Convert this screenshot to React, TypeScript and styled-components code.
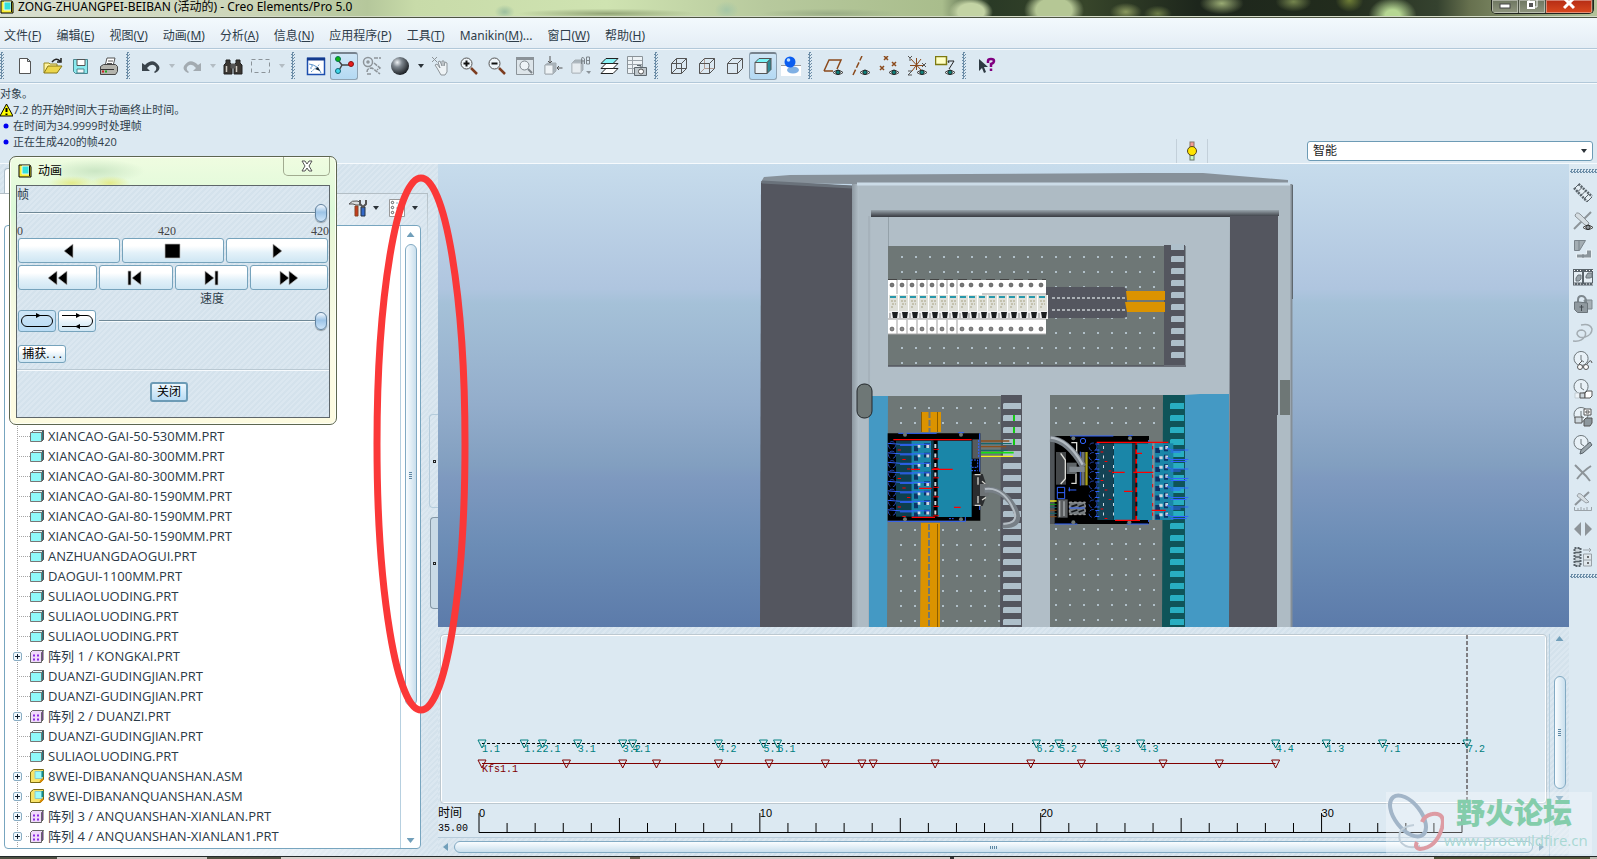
import React, { ReactNode } from "react";
import styled, { createGlobalStyle, css } from "styled-components";

const UI = `"Open Sans", "Noto Sans CJK SC", sans-serif`;
const WIDE = `"Noto Sans", "Noto Sans CJK SC", sans-serif`;
const SONG = `"Liberation Serif", "Noto Sans CJK SC", serif`;
const MONO = `"Liberation Mono", "Noto Sans CJK SC", monospace`;
const STRIPES = "repeating-linear-gradient(135deg, #dbe7f0 0 2px, #d4e2ec 2px 4px)";

const Global = createGlobalStyle`
  *, *::before, *::after { box-sizing: border-box; }
  body { margin: 0; background: #dce9f2; color: #2e3d4a; font: 12px/16px ${UI}; }
  button { font: inherit; color: inherit; padding: 0; border: 0; background: none; }
`;

const Window = styled.div`
  position: relative;
  min-height: 100vh;
  display: flex;
  flex-direction: column;
  overflow: hidden;
`;

/* ---------- title bar ---------- */

const TitleBar = styled.header`
  height: 18px;
  display: flex;
  align-items: flex-start;
  border-bottom: 1px solid #4c5442;
  box-shadow: inset 0 -1px #d5dcc8;
  background:
    radial-gradient(ellipse 22px 14px at 60.8% 70%, #c3d3a4 60%, transparent),
    radial-gradient(ellipse 30px 20px at 66% 60%, #b5c795 60%, transparent),
    radial-gradient(ellipse 16px 9px at 70.5% 70%, #8c9a60, transparent),
    radial-gradient(ellipse 22px 11px at 76.5% 20%, #9aab74, transparent),
    radial-gradient(ellipse 14px 8px at 72.5% 80%, #6d7d48, transparent),
    radial-gradient(ellipse 18px 10px at 81% 10%, #75854e, transparent),
    radial-gradient(ellipse 14px 12px at 84.5% 0%, #6f7e37, transparent),
    radial-gradient(ellipse 24px 18px at 87.2% 90%, #b6d793 30%, transparent),
    radial-gradient(ellipse 10px 7px at 31.6% 70%, #9cbf9f, transparent),
    radial-gradient(ellipse 90px 5px at 38% 80%, #93a577, transparent),
    radial-gradient(ellipse 12px 9px at 45.5% 60%, #a5c6a6, transparent),
    radial-gradient(ellipse 70px 5px at 52% 80%, #9aad86, transparent),
    linear-gradient(90deg, #d9dfd0 0, #cdd6b9 15%, #b5c79b 23%, #c8dba9 26%, #cfe3b1 38%, #b7c99d 48%, #a9bd8c 59%, #2a3a26 62%, #37452a 68%, #1d261c 75%, #222c1d 84%, #35422f 90%, #66704e 92%, #b4c49a 100%);
`;

const TitleText = styled.h1`
  margin: 0;
  flex: 1;
  padding-left: 4px;
  font: 12px/14px ${WIDE};
  color: #000;
  white-space: nowrap;
`;

const WindowButtons = styled.div`
  display: flex;
  margin-right: 3px;
  border: 1px solid #20241e;
  border-top: 0;
  border-radius: 0 0 5px 5px;
  overflow: hidden;
`;

const WindowButton = styled.button<{ $wide?: boolean }>`
  width: ${(p) => (p.$wide ? 47 : 27)}px;
  height: 13px;
  display: flex;
  justify-content: center;
  border-right: 1px solid #4a5042;
  box-shadow: inset 0 0 0 1px rgba(255, 255, 255, 0.4);
  background: ${(p) =>
    p.$wide ? "linear-gradient(#b52c14, #d9481e)" : "linear-gradient(#6d755f, #8f967f)"};
`;

/* ---------- menu and toolbar ---------- */

const MenuBar = styled.nav`
  height: 30px;
  display: flex;
  align-items: center;
  gap: 15px;
  padding: 5px 0 0 4px;
  font-family: ${WIDE};
  background: linear-gradient(#f3f9fd, #e4edf5);
`;

const MenuButton = styled.button`
  white-space: nowrap;
`;

const ToolBar = styled.div`
  height: 35px;
  display: flex;
  align-items: center;
  border-top: 1px solid #b2c8d9;
  border-bottom: 1px solid #b2c8d9;
  box-shadow: inset 0 1px #f6fafd, 0 1px #f6fafd;
`;

const Grip = styled.span<{ $first?: boolean }>`
  width: 4px;
  height: 27px;
  margin: 0 7px 0 ${(p) => (p.$first ? 0 : 3)}px;
  background: repeating-conic-gradient(#6d8ea8 0 25%, transparent 0 50%) 0 0 / 3px 3px;
`;

const ToolButton = styled.button<{ $on?: boolean; $w?: number }>`
  width: ${(p) => p.$w ?? 28}px;
  height: 28px;
  display: flex;
  align-items: center;
  justify-content: center;
  ${(p) =>
    p.$on &&
    css`
      border: 1px solid #8fa3b3;
      border-top: 2px solid #77838e;
      border-radius: 3px;
      background: linear-gradient(#cfe6f6, #b4d9f3);
    `}
`;

const DropArrow = styled.button<{ $dim?: boolean }>`
  width: 13px;
  height: 28px;
  display: flex;
  align-items: center;
  justify-content: center;
  &::after {
    content: "";
    border: 3px solid transparent;
    border-top: 4px solid ${(p) => (p.$dim ? "#b3bcc3" : "#2b3238")};
    border-bottom: 0;
  }
`;

/* ---------- messages ---------- */

const MessageArea = styled.section`
  min-height: 81px;
  display: flex;
  justify-content: space-between;
  align-items: flex-end;
  border-bottom: 1px solid #f6fafd;
`;

const MessageList = styled.ul`
  align-self: flex-start;
  list-style: none;
  margin: 0;
  padding: 3px 0 0;
`;

const Message = styled.li`
  display: flex;
  align-items: center;
  height: 16px;
  font-size: 11px;
  white-space: nowrap;
`;

const MessageMark = styled.span`
  width: 13px;
  height: 16px;
  display: flex;
  align-items: center;
  justify-content: center;
  flex: none;
`;

const StatusTools = styled.div`
  display: flex;
  align-items: center;
  padding: 0 4px 0 0;
`;

const StatusLight = styled.div`
  width: 32px;
  height: 24px;
  margin-right: 99px;
  display: flex;
  align-items: center;
  justify-content: center;
  border: 1px solid #c3d0da;
  border-width: 0 1px;
`;

const FilterSelect = styled.select`
  appearance: none;
  width: 286px;
  height: 20px;
  padding: 0 5px;
  border: 1px solid #6d9bb5;
  border-radius: 3px;
  color: #222;
  font: 12px/16px ${UI};
  background: #fff;
`;

const SelectWrap = styled.label`
  display: flex;
  align-items: center;
  &::after {
    content: "";
    width: 6px;
    margin-left: -12px;
    margin-right: 6px;
    border: 3px solid transparent;
    border-top: 4px solid #2b3238;
    border-bottom: 0;
    pointer-events: none;
  }
`;

/* ---------- workspace ---------- */

const Workspace = styled.main`
  flex: 1;
  display: flex;
`;

const SidePanel = styled.aside`
  flex: 0 0 438px;
  display: flex;
  flex-direction: column;
  background: ${STRIPES};
`;

const TabRow = styled.div`
  height: 29px;
  padding: 4px 0 0 4px;
`;

const Tab = styled.div`
  width: 150px;
  height: 25px;
  border: 1px solid #a9bac6;
  border-bottom: 0;
  border-radius: 4px 4px 0 0;
  background: linear-gradient(90deg, #fff, #dfe9f1);
`;

const PanelBody = styled.div`
  flex: 1;
  display: flex;
  background: linear-gradient(90deg, #fff 0, #fff 20%, rgba(255, 255, 255, 0) 100%);
`;

const PanelMain = styled.div`
  flex: 1;
  display: flex;
  flex-direction: column;
  padding: 0 7px 7px 4px;
  border-top: 1px solid #b3bec5;
  background: linear-gradient(#b3bec5, transparent 60px) right top / 1px 100% no-repeat;
`;

const PanelTools = styled.div`
  height: 31px;
  display: flex;
  justify-content: flex-end;
  gap: 4px;
  padding-bottom: 3px;
`;

const ToolPair = styled.div`
  display: flex;
`;

const TreeBox = styled.div`
  flex: 1;
  display: flex;
  border: 1px solid #77a5bf;
  border-radius: 4px;
  background: #fff;
`;

const Tree = styled.ul`
  flex: 1;
  list-style: none;
  margin: 0 0 1px 12px;
  padding: 200px 0 0;
  background: repeating-linear-gradient(#a5a5a5 0 1px, transparent 1px 2px) 0 100% / 1px 100% no-repeat;
`;

const TreeRow = styled.li`
  height: 20px;
  display: flex;
  align-items: center;
  color: #2b3a47;
  font-size: 13px;
  white-space: nowrap;
`;

const Branch = styled.span<{ $short?: boolean }>`
  width: ${(p) => (p.$short ? 4 : 13)}px;
  height: 20px;
  background: repeating-linear-gradient(90deg, #a5a5a5 0 1px, transparent 1px 2px) 0 10px / 100% 1px no-repeat;
`;

const Expander = styled.button`
  width: 9px;
  height: 9px;
  margin: 1px 4px 0 -4px;
  border: 1px solid #8aaec5;
  border-radius: 2px;
  background:
    linear-gradient(#123, #123) center / 5px 1px no-repeat,
    linear-gradient(#123, #123) center / 1px 5px no-repeat, #f2f8fc;
`;

const RowIcon = styled.span`
  width: 14px;
  height: 14px;
  margin-right: 4px;
  display: flex;
`;

const ScrollStrip = styled.div<{ $flat?: boolean }>`
  display: flex;
  flex-direction: ${(p) => (p.$flat ? "row" : "column")};
  align-items: center;
  ${(p) =>
    p.$flat
      ? css`
          height: 19px;
          border-top: 1px solid #b7cbda;
          padding: 0 5px 0 5px;
          gap: 6px;
        `
      : css`
          width: 20px;
          border-left: 1px solid #b7d0e0;
          padding: 6px 0 5px;
          gap: 7px;
        `}
`;

const Thumb = styled.div<{ $flat?: boolean; $start?: number; $end?: number }>`
  flex: 1;
  display: flex;
  align-items: center;
  justify-content: center;
  border: 1px solid #82aac3;
  border-radius: 6px;
  ${(p) =>
    p.$flat
      ? "height: 12px; background: linear-gradient(#fafdff, #c9dfed);"
      : `width: 12px; margin: ${p.$start ?? 0}px 0 ${p.$end ?? 0}px; background: linear-gradient(90deg, #fafdff, #c9dfed);`}
  &::after {
    content: "";
    width: ${(p) => (p.$flat ? 8 : 3)}px;
    height: ${(p) => (p.$flat ? 3 : 7)}px;
    background: ${(p) =>
      p.$flat
        ? "repeating-linear-gradient(90deg, #5d87a3 0 1px, transparent 1px 2px)"
        : "repeating-linear-gradient(#5d87a3 0 1px, transparent 1px 2px)"};
  }
`;

const ScrollArrow = styled.button<{ $dir: "up" | "down" | "left" | "right" }>`
  width: 8px;
  height: 5px;
  background: #719fba;
  ${(p) =>
    p.$dir === "up"
      ? "clip-path: polygon(50% 0, 100% 100%, 0 100%);"
      : p.$dir === "down"
      ? "clip-path: polygon(0 0, 100% 0, 50% 100%);"
      : p.$dir === "left"
      ? "width: 5px; height: 8px; clip-path: polygon(0 50%, 100% 0, 100% 100%);"
      : "width: 5px; height: 8px; clip-path: polygon(0 0, 100% 50%, 0 100%);"}
`;

const Sash = styled.div`
  flex: 0 0 10px;
  display: flex;
  flex-direction: column;
  align-items: flex-end;
  gap: 9px;
  padding-top: 221px;
  background: ${STRIPES};
`;

const SashTab = styled.button<{ $strong?: boolean }>`
  width: ${(p) => (p.$strong ? 8 : 9)}px;
  height: ${(p) => (p.$strong ? 92 : 94)}px;
  border: 1px solid ${(p) => (p.$strong ? "#8497a6" : "#b4cbdb")};
  border-right: 0;
  border-radius: 4px 0 0 4px;
  display: flex;
  align-items: center;
  justify-content: center;
  background: ${(p) => (p.$strong ? "#c9dae6" : "transparent")};
  &::after {
    content: "";
    width: 3px;
    height: 3px;
    border: 1px solid #222;
  }
`;

const Center = styled.div`
  flex: 1;
  min-width: 0;
  display: flex;
  flex-direction: column;
`;

const Viewport = styled.div`
  flex: 1;
  min-height: 463px;
  display: flex;
  background: linear-gradient(#c7dcec 0, #afc5df 27%, #a5c1d8 30%, #93adcb 52%, #829fc0 65%, #7e99bf 68%, #6c8db6 82%, #5c7baa 100%);
  & > svg { flex: 1; width: 100%; height: auto; }
`;

const RightTools = styled.div`
  flex: 0 0 28px;
  display: flex;
  flex-direction: column;
  align-items: center;
  padding-top: 5px;
`;

const GripFlat = styled.span`
  width: 27px;
  height: 4px;
  margin: 0 0 6px;
  background: repeating-conic-gradient(#6d8ea8 0 25%, transparent 0 50%) 0 0 / 3px 3px;
`;

const RightFoot = styled(GripFlat)`
  margin: 3px 0 0;
`;

/* ---------- timeline ---------- */

const Timeline = styled.section`
  display: flex;
  background: ${STRIPES};
`;

const TimelineMain = styled.div`
  flex: 1;
  min-width: 0;
`;

const Plot = styled.div`
  height: 170px;
  margin: 7px 2px 0 2px;
  padding: 0 79px 0 41px;
  border: 1px solid #bcc8d0;
  border-radius: 4px;
  box-shadow: inset 1px 1px #fff, inset -1px -1px #fff;
  background: #dce9f2;
  & svg { display: block; overflow: visible; }
  & text { font: 10px ${MONO}; }
`;

const RulerRow = styled.div`
  height: 33px;
  display: flex;
  padding-right: 87px;
  background: #dce9f2;
  & svg { flex: 1; height: 33px; overflow: visible; }
  & text { font: 11px "Liberation Sans", sans-serif; }
`;

const RulerLabel = styled.div`
  width: 41px;
  padding-top: 1px;
  color: #000;
  font: 12px/16px ${UI};
`;

const RulerValue = styled.div`
  font: 10px/16px ${MONO};
`;

const TimelineScroll = styled.div`
  width: 20px;
  margin-top: 7px;
  display: flex;
  & > div { padding: 2px 0 55px; }
`;

const DesktopEdge = styled.footer`
  height: 3px;
  border-top: 1px solid #23292a;
  background: linear-gradient(90deg, #4d5042 0 57px, #cfccc8 57px 207px, #4f5243 207px 281px, #d5d0cb 281px 630px, #6a614e 630px 640px, #d5cdc8 640px 950px, #333 950px 954px, #d9d2cd 954px 1276px, #d9d9d4 1276px 1434px, #4e5236 1434px 1590px, #b9bbb0 1590px);
`;

/* ---------- animation dialog ---------- */

const Dialog = styled.section`
  position: absolute;
  left: 9px;
  top: 156px;
  width: 328px;
  padding: 0 6px 6px;
  border: 1px solid #5d6650;
  border-radius: 7px;
  box-shadow: inset 0 0 0 1px #fdfff5;
  background:
    radial-gradient(ellipse 24px 7px at 62px 26px, #e3ea8a, transparent),
    radial-gradient(ellipse 20px 7px at 100px 26px, #e3ea8a, transparent),
    radial-gradient(ellipse 50px 12px at 85px 14px, #cbe6c4, transparent),
    linear-gradient(#effce0, #dcf9d8 20%, #eaf7d8 30%, #fbfbe8 70%, #fdfbe0);
`;

const DialogHead = styled.div`
  height: 28px;
  display: flex;
  align-items: flex-start;
  justify-content: space-between;
`;

const DialogTitle = styled.h2`
  margin: 0;
  display: flex;
  align-items: center;
  gap: 6px;
  padding: 6px 0 0 2px;
  font-size: 12px;
  font-weight: 400;
  line-height: 16px;
  color: #000;
`;

const DialogClose = styled.button`
  width: 47px;
  height: 19px;
  display: flex;
  align-items: center;
  justify-content: center;
  border: 1px solid #a1ab90;
  border-top: 0;
  border-radius: 0 0 5px 5px;
`;

const DialogBody = styled.div`
  height: 233px;
  display: flex;
  flex-direction: column;
  border: 1px solid #5e666a;
  background: ${STRIPES};
`;

const FrameLabel = styled.label`
  height: 18px;
  line-height: 18px;
`;

const Slider = styled.input`
  appearance: none;
  flex: none;
  height: 18px;
  margin: 0 2px;
  background: linear-gradient(#6f8896 0 1px, #f5fafc 1px 2px) center / 100% 2px no-repeat;
  &::-webkit-slider-thumb {
    appearance: none;
    width: 12px;
    height: 18px;
    border: 1px solid #6283a0;
    border-radius: 6px;
    box-shadow: 0 1px 1px #8c98a0;
    background: linear-gradient(#f5faff, #9cc3e6 45%, #cde5fa);
  }
`;

const ScaleRow = styled.div`
  height: 16px;
  display: flex;
  justify-content: space-between;
  padding-top: 1px;
  color: #444;
  font: 12px/16px ${SONG};
`;

const ButtonRow = styled.div`
  display: flex;
  gap: 2px;
  padding: 0 1px;
  margin-bottom: 2px;
`;

const SoftButton = styled.button<{ $on?: boolean; $w?: number; $h?: number }>`
  ${(p) => (p.$w ? `flex: 0 0 ${p.$w}px;` : "flex: 1;")}
  height: ${(p) => p.$h ?? 25}px;
  display: flex;
  align-items: center;
  justify-content: center;
  border: 1px solid #76a3bc;
  border-radius: 3px;
  color: #000;
  background: ${(p) =>
    p.$on ? "linear-gradient(#cfe6f7, #b8dbf4)" : "linear-gradient(#fff 30%, #e3f1f9 60%, #cfe6f3)"};
`;

const SpeedLabel = styled.label`
  height: 18px;
  line-height: 14px;
  padding: 0 0 0 183px;
`;

const SpeedRow = styled.div`
  display: flex;
  align-items: center;
  gap: 2px;
  padding: 0 1px;
  & input { flex: 1; margin: 0 1px 0 1px; }
`;

const CaptureRow = styled.div`
  padding: 13px 0 6px 1px;
  display: flex;
`;

const DialogFoot = styled.div`
  flex: 1;
  display: flex;
  justify-content: center;
  padding: 12px 8px 0 0;
  border-top: 1px solid #b9c8d2;
  box-shadow: inset 0 1px #f6fafd;
`;

const CloseButton = styled(SoftButton)`
  border: 2px solid #6c9bb6;
  background: linear-gradient(#eef7fd, #b9dcf5);
`;

/* ---------- overlays ---------- */

const Ring = styled.svg`
  position: absolute;
  left: 373px;
  top: 173px;
  width: 96px;
  height: 542px;
  pointer-events: none;
`;

const Watermark = styled.div`
  position: absolute;
  right: 5px;
  bottom: 5px;
  display: flex;
  background: rgba(255, 255, 255, 0.3);
`;

const WatermarkText = styled.div`
  width: 148px;
  display: flex;
  flex-direction: column;
`;

const WatermarkName = styled.strong`
  padding-left: 12px;
  font: 900 29px/38px "Noto Sans CJK SC", sans-serif;
  color: #84cdab;
  white-space: nowrap;
`;

const WatermarkUrl = styled.span`
  font: 15px/20px "Open Sans", sans-serif;
  color: #a9d8d3;
`;

/* ---------- icons ---------- */

const Svg = ({ children, s = 20 }: { children: ReactNode; s?: number }) => (
  <svg width={s} height={s} viewBox={`0 0 ${s} ${s}`} fill="none" stroke="#555" aria-hidden="true">
    {children}
  </svg>
);

const Eye = ({ x = 9, y = 13, c = "#0f7f7a" }: { x?: number; y?: number; c?: string }) => (
  <g transform={`translate(${x} ${y})`} strokeWidth="1">
    <path d="M0 3.500Q5-1 10 3.500Q5 7.500 0 3.500Z" fill="#fff" stroke="#444" />
    <circle cx="5" cy="3.300" r="2.200" fill={c} stroke="#222" />
  </g>
);

const cubeWire = "M2.500 7.500h10v10h-10zM2.500 7.500l5-5h10v10l-5 5M12.500 7.500l5-5";
const X = ({ x, y }: { x: number; y: number }) => (
  <path d={`M${x} ${y}l4 4m0-4l-4 4`} stroke="#8b4a1c" strokeWidth="1.500" />
);
const Clock = () => <path d="M8 .5a7 7 0 1 0 .1 0ZM8 4v5l3 2" fill="#e8f1f7" stroke="#6b7478" />;

const icons: Record<string, ReactNode> = {
  new: <path d="M4.500 2.500h8l3 3v12h-11zM12.500 2.500v3h3" fill="#fff" />,
  open: (
    <>
      <path d="M1 17V7h5l1 1h7v3" fill="#fff3a0" stroke="#9a8a20" />
      <path d="M1 17l4-7h14l-5 7z" fill="#ecd64c" stroke="#8a7a18" />
      <path d="M9 6q4-5 8-1m1-3v4h-4" stroke="#222" strokeWidth="1.500" />
    </>
  ),
  save: (
    <>
      <path d="M2.500 3.500h14v14h-12l-2-2z" fill="#8ae9ee" stroke="#4b8790" />
      <path d="M6 3.500h8v6H6z" fill="#fff" />
      <path d="M6 13h7v4H6z" fill="#f3f7f8" stroke="#4b8790" />
    </>
  ),
  print: (
    <>
      <path d="M6 10l2-8h8l-2 8" fill="#fff" />
      <path d="M9 5h5M8 7.500h5" />
      <path d="M1.500 10.500l3-2h12l2 2v5l-2 3h-15z" fill="#b3b3ac" stroke="#444" />
      <path d="M2 13.500h13" stroke="#333" />
      <path d="M3 15.500h2" stroke="#c22" strokeWidth="2" />
      <path d="M6 15.500h2" stroke="#2a2" strokeWidth="2" />
    </>
  ),
  undo: <path d="M1 7v8h8l-3-3q5-6 9-1q1 3-2 5l1 1q6-3 4-7q-6-9-14-1z" fill="#3a444c" stroke="none" />,
  redo: <path d="M19 7v8h-8l3-3q-5-6-9-1q-1 3 2 5l-1 1q-6-3-4-7q6-9 14-1z" fill="#a3abb1" stroke="none" />,
  find: (
    <>
      <path d="M3 4h4v3l2 2v9H1V9l2-2zM13 4h4v3l2 2v9h-8V9l2-2z" fill="#3b3733" stroke="#222" />
      <path d="M8 8h4v4H8z" fill="#555" />
      <path d="M3.500 10v6M13.500 10v6" stroke="#cfcac2" strokeWidth="1.500" />
    </>
  ),
  select: <path d="M.5 3.500h18v13H.5z" stroke="#8b9399" strokeDasharray="4 3" />,
  repaint: (
    <>
      <path d="M1.500 2.500h17v16h-17z" fill="#fff" stroke="#1d4fae" strokeWidth="1.500" />
      <path d="M1 3h18" stroke="#133b8f" strokeWidth="3" />
      <path d="M3 8q9 1 12 9" stroke="#5b94cc" />
      <path d="M5 16l9-8M4 12h3M6 9v2" stroke="#5b94cc" strokeDasharray="2 1" />
      <path d="M9 13l3-2 2 4z" fill="#123" stroke="none" />
    </>
  ),
  spin: (
    <>
      <path d="M4 4l4 5h8M8 9l-4 7" stroke="#444" strokeWidth="1.500" />
      <circle cx="4" cy="3" r="2.500" fill="#11b411" stroke="#075" />
      <circle cx="17" cy="8" r="2.500" fill="#e81c1c" stroke="#811" />
      <circle cx="4" cy="15" r="2.500" fill="#3fd7ea" stroke="#167" />
    </>
  ),
  orientMode: (
    <g stroke="#8d9499" strokeWidth="1.500">
      <circle cx="6" cy="6" r="4.500" />
      <circle cx="6" cy="6" r="1" />
      <path d="M12 2h7M12 7l6 5-3 2M5 16q0-4 5-4l8 6M5 18h4" strokeDasharray="4 1" />
    </g>
  ),
  sphere: (
    <>
      <defs>
        <radialGradient id="ball" cx=".35" cy=".3" r=".75">
          <stop offset="0" stopColor="#eef2f5" />
          <stop offset=".35" stopColor="#7d868e" />
          <stop offset="1" stopColor="#14181c" />
        </radialGradient>
      </defs>
      <circle cx="10" cy="10" r="9" fill="url(#ball)" stroke="none" />
    </>
  ),
  hand: (
    <>
      <path d="M1 1l5 5m0-5l-5 5" stroke="#8d9499" />
      <path d="M6 12l-2-3 2-1 3 4-2-6 2-1 2 5V5h2v5l1-4 2 1v9l-2 3H10z" fill="#eef3f6" stroke="#8d9499" />
    </>
  ),
  zoomIn: (
    <>
      <circle cx="7.500" cy="7.500" r="5.500" fill="#eef4f8" />
      <path d="M4.500 7.500h6m-3-3v6" stroke="#111" strokeWidth="2" />
      <path d="M12 12l6 6" stroke="#7d3d20" strokeWidth="2.500" />
    </>
  ),
  zoomOut: (
    <>
      <circle cx="7.500" cy="7.500" r="5.500" fill="#eef4f8" />
      <path d="M4.500 7.500h6" stroke="#111" strokeWidth="2" />
      <path d="M12 12l6 6" stroke="#7d3d20" strokeWidth="2.500" />
    </>
  ),
  refit: (
    <>
      <path d="M1.500 1.500h17v17h-17z" fill="#dde5ea" stroke="#8b9399" />
      <path d="M1 2.500h18" stroke="#8b9399" strokeWidth="3" />
      <circle cx="9.500" cy="9.500" r="4.500" fill="#edf3f7" stroke="#7d858b" />
      <path d="M13 13l4 4" stroke="#7d858b" strokeWidth="2" />
    </>
  ),
  reorient: (
    <>
      <path d="M2 9l3-2h8v8l-3 3H2z" fill="#a9b4bb" stroke="#a5adb3" />
      <path d="M2 9h8v9H2z" fill="#edf2f5" stroke="#a5adb3" />
      <path d="M7 0v7M5 5l2 2 2-2M19.500 12H14M16 10l-2 2 2 2" stroke="#555" />
    </>
  ),
  saved: (
    <>
      <path d="M1 7l3-3h8v10l-3 3H1z" fill="#a9b4bb" stroke="#a5adb3" />
      <path d="M1 7h9v10H1z" fill="#e6ecf0" stroke="#b5bdc3" />
      <path d="M10.500 8V3l1-2 2 2v5M10.500 5h3M15.500 1v7h3V1zM15.500 4.500h3" stroke="#7b8389" />
      <path d="M15 15h5l-2 3z" fill="#8b9399" stroke="none" />
    </>
  ),
  layers: (
    <>
      <path d="M2 17.500l5-5h12l-5 5z" fill="#fff" stroke="#222" />
      <path d="M2 12.500l5-5h12l-5 5z" fill="#fff" stroke="#222" />
      <path d="M2 7.500l5-5h12l-5 5z" fill="#8af2f5" stroke="#222" />
    </>
  ),
  views: (
    <>
      <path d="M.5.500h15v17H.5z" fill="#eef3f6" stroke="#8b9399" />
      <path d="M1 4.500h14M1 8.500h14M1 12.500h14M5.500 1v16" stroke="#9ba3a9" />
      <path d="M7.500 11.500h12v8h-12zM10 9.500h4v2" fill="#bfc7cc" stroke="#5e676d" />
      <circle cx="14" cy="15.500" r="2.500" fill="#fff" />
    </>
  ),
  wire: <path d={cubeWire + "M2.500 17.500l5-5h10M7.500 2.500v10"} />,
  hidden: (
    <>
      <path d="M2.500 17.500l5-5h10M7.500 2.500v10" stroke="#b09c94" />
      <path d={cubeWire} />
    </>
  ),
  noHidden: <path d={cubeWire} />,
  shaded: (
    <>
      <path d="M2 6.500l4-4h12l-4 4z" fill="#7af4f6" />
      <path d="M14 6.500l4-4v11l-4 4z" fill="#2d8c96" />
      <path d="M2 6.500h12v11H2z" fill="#e9f1f6" />
    </>
  ),
  real: (
    <>
      <path d="M0 10h20v10H0z" fill="#fff" stroke="none" />
      <path d="M0 9.500h20" stroke="#999" />
      <ellipse cx="12" cy="14" rx="6" ry="3.500" fill="#7fb0e4" stroke="none" />
      <circle cx="9" cy="6" r="5.500" fill="#0a5df0" stroke="none" />
      <circle cx="7.500" cy="4" r="1.800" fill="#bfe0ff" stroke="none" />
    </>
  ),
  plane: (
    <>
      <path d="M1 15L6 4h12l-4 9M1 15h9" stroke="#8b4a1c" strokeWidth="1.500" />
      <Eye x={10} />
    </>
  ),
  axis: (
    <>
      <path d="M2 19L11 0" stroke="#8b4a1c" strokeWidth="1.500" strokeDasharray="6 2" />
      <Eye x={9} />
    </>
  ),
  points: (
    <>
      <X x={5} y={0} />
      <X x={13} y={6} />
      <X x={1} y={10} />
      <Eye x={10} />
    </>
  ),
  csys: (
    <>
      <path d="M4 3l10 11M14 3L5 15M3 9.500h13M9.500 2v12" stroke="#8b4a1c" />
      <path d="M1 0l2 2 2-2M3 2v3M15 7l4 4m0-4l-4 4M1 15h4l-4 4h4" stroke="#555" />
      <Eye x={10} />
    </>
  ),
  annot: (
    <>
      <path d="M.5.500h11v8H.5z" fill="#ffffc4" stroke="#7d7a10" strokeWidth="1.500" />
      <path d="M13 5h6l-5 8M13 5l1 2" stroke="#222" />
      <Eye x={10} />
    </>
  ),
  help: (
    <>
      <path d="M2 3v12l3-3 2 5 2-1-2-5h4z" fill="#2e3a42" stroke="none" />
      <path d="M11 7V5q0-2 3-2t3 2q0 2-3 3v3M14 12.500v2.500" stroke="#800080" strokeWidth="2.500" />
    </>
  ),
  film: (
    <>
      <path d="M1 5L5 1l14 12-5 6z" fill="#e5eef4" stroke="none" />
      <path d="M1 5l13 13.500M5.500 1L19 13.500" stroke="#59636a" strokeDasharray="2 1" strokeWidth="2.500" />
      <path d="M1 6l5-5M4 9.500l5-5M7.500 13l5-5M11 16l5-5M14 19l5-5" stroke="#59636a" />
    </>
  ),
  connect: (
    <>
      <path d="M1 18L18 1" stroke="#8d9499" strokeWidth="2" />
      <path d="M2 5q1-5 5-2l9 9-1 3-3-1z" fill="#d5dde2" stroke="#8d9499" />
      <Eye x={10} y={13} c="#8d9499" />
    </>
  ),
  body: (
    <>
      <path d="M1.500 1.500h11l-6 10h-5z" fill="#a3adb3" stroke="#79838a" />
      <path d="M3.500 15h10v-4h5v8h-15z" fill="#8d979d" stroke="#e9f1f6" />
      <path d="M6 2v9M10 15v4" stroke="#79838a" />
    </>
  ),
  keyframe: (
    <>
      <path d="M.5 2.500h19v15H.5z" fill="#e5eef4" stroke="#59636a" />
      <path d="M0 3.500h20M0 17h20" stroke="#59636a" strokeWidth="3" />
      <path d="M1 3.500h19M1 17h19" stroke="#fff" strokeDasharray="1 2" />
      <path d="M10 3v14" stroke="#59636a" strokeWidth="2" />
      <path d="M3 11l2-3h3v4l-2 2H3zM13 9l2-3h4v4l-2 1h-4z" fill="#9aa5ab" stroke="#6b757b" />
    </>
  ),
  lock: (
    <>
      <path d="M11 5h8v9h-6z" fill="#a6b0b6" stroke="#7d878d" />
      <path d="M5 8V5q0-4 3.500-4T13 5v3" stroke="#7d878d" strokeWidth="2" />
      <path d="M1.500 7h4l9 1v9.500h-10l-3-3z" fill="#8f999f" stroke="#6b757b" />
      <path d="M8.500 10v6M6.500 12h4" stroke="#444c52" />
    </>
  ),
  servo: <path d="M0 18q9 1 12-5q2-5-3-6q-5 0-5 4q2 5 8 3q7-2 7-8q-2-6-11-4" stroke="#a3acb2" strokeWidth="1.500" />,
  viewTime: (
    <>
      <Clock />
      <circle cx="7" cy="16" r="2.500" fill="#fff" />
      <circle cx="13" cy="16" r="2.500" fill="#fff" />
      <path d="M6 13l3-3M14 13q4-6 5-1" />
    </>
  ),
  transp: (
    <>
      <Clock />
      <path d="M2 14h5v5H2z" fill="#eef4f8" stroke="#c2ccd2" />
      <path d="M7 14h5v5H7z" fill="#cdd7dd" />
      <path d="M12 14l2-2h5v5l-2 2h-5z" fill="#fff" />
    </>
  ),
  display: (
    <>
      <Clock />
      <path d="M2 10h7v6H2z" fill="#cdd7dd" />
      <path d="M11 2h7v6h-7zM13 4h3v2h-3z" fill="#fff" />
      <path d="M11 13l2-2h6v5l-2 3h-6z" fill="#8d979d" />
    </>
  ),
  edit: (
    <>
      <Clock />
      <path d="M7 19l1-4 9-8 2 3-9 8z" fill="#9aa5ab" stroke="#59636a" />
    </>
  ),
  del: <path d="M2 2l11 11 4 5M18 3Q10 8 4 16" stroke="#8d9499" strokeWidth="2" />,
  measure: (
    <>
      <path d="M2 14L16 1" stroke="#8d9499" strokeWidth="2" />
      <path d="M4 5q1-4 4-2l8 8-3 1z" fill="#d5dde2" stroke="#9aa2a8" />
      <path d="M1.500 16v3.500h17V16M5 17v2M8 16v3M11 17v2M14 16v3" stroke="#9aa2a8" />
    </>
  ),
  play: <path d="M8 3v14l-7-7zM12 3v14l7-7z" fill="#8d9499" stroke="none" />,
  export: (
    <>
      <path d="M1.500 1h6v18h-6z" fill="#cdd7dd" stroke="#59636a" strokeWidth="2" strokeDasharray="2 1" />
      <path d="M2 5.500h5M2 10h5M2 14.500h5" stroke="#59636a" strokeWidth="1.500" />
      <path d="M10 3h8l-2-2m2 2l-2 2" stroke="#9aa2a8" />
      <path d="M10.500 7h8v12h-8zM11 13h8" fill="#dfe7ec" stroke="#9aa2a8" />
      <path d="M14 10h2M14 16h2" stroke="#444" strokeWidth="1.500" />
    </>
  ),
};

const AppIcon = () => (
  <Svg s={14}>
    <path d="M1 1h11l1 2v10H1z" fill="#f8ee35" stroke="#000" />
    <path d="M4 2h7v8H4z" fill="#35e0dc" stroke="#e9fbe9" />
    <path d="M11.500 2v10" stroke="#111" />
  </Svg>
);

const PartIcon = () => (
  <Svg s={14}>
    <path d="M1.500 3.500l2-2h10l-2 2z" fill="#e9feff" stroke="#6e6e6e" />
    <path d="M11.500 3.500l2-2v9l-2 2z" fill="#237d85" stroke="#555" />
    <path d="M.5 3.500h11v9H.5z" fill="#8ffafa" stroke="#777" />
  </Svg>
);
const PatternIcon = () => (
  <Svg s={14}>
    <path d="M11 3l2-2v10l-2 2z" fill="#8d3fc4" stroke="#555" />
    <path d="M.5 3.500l2-2h11l-2 2v10H.5z" fill="#f0d9fb" stroke="#666" />
    <path d="M3 6.500h2M7 6.500h2M3 10.500h2M7 10.500h2" stroke="#8a2be2" strokeWidth="2" />
  </Svg>
);
const AsmIcon = () => (
  <Svg s={14}>
    <path d="M.5 3l3-2.500h10v10l-3 3H.5z" fill="#f7e268" stroke="#7a6a10" />
    <path d="M5 2.500h7v7H5z" fill="#9dfbfb" stroke="#8cc" />
    <path d="M12.500 2v6" stroke="#0e8a92" strokeWidth="2" />
    <path d="M10 13l3-3" stroke="#d98a00" strokeWidth="2" />
  </Svg>
);

/* ---------- data ---------- */

const menus: [string, string, string?][] = [
  ["文件", "F"], ["编辑", "E"], ["视图", "V"], ["动画", "M"], ["分析", "A"], ["信息", "N"],
  ["应用程序", "P"], ["工具", "T"], ["Manikin", "M", "..."], ["窗口", "W"], ["帮助", "H"],
];

const toolbar = [
  "|", "new", "open", "save", "print", "|", "undo", "v-", "redo", "v-", "find", "select", "v-", "|",
  "repaint", "spin*", "orientMode", "sphere", "v", "hand", "zoomIn", "zoomOut", "refit", "reorient",
  "saved", "layers", "views", "|", "wire", "hidden", "noHidden", "shaded*", "real", "|", "plane",
  "axis", "points", "csys", "annot", "|", "help",
];

const sideIcons = [
  "film", "connect", "body", "keyframe", "lock", "servo", "viewTime", "transp", "display", "edit",
  "del", "measure", "play", "export",
];

const tree: [string, "part" | "pattern" | "asm"][] = [
  ["XIANCAO-GAI-50-530MM.PRT", "part"],
  ["XIANCAO-GAI-80-300MM.PRT", "part"],
  ["XIANCAO-GAI-80-300MM.PRT", "part"],
  ["XIANCAO-GAI-80-1590MM.PRT", "part"],
  ["XIANCAO-GAI-80-1590MM.PRT", "part"],
  ["XIANCAO-GAI-50-1590MM.PRT", "part"],
  ["ANZHUANGDAOGUI.PRT", "part"],
  ["DAOGUI-1100MM.PRT", "part"],
  ["SULIAOLUODING.PRT", "part"],
  ["SULIAOLUODING.PRT", "part"],
  ["SULIAOLUODING.PRT", "part"],
  ["阵列 1 / KONGKAI.PRT", "pattern"],
  ["DUANZI-GUDINGJIAN.PRT", "part"],
  ["DUANZI-GUDINGJIAN.PRT", "part"],
  ["阵列 2 / DUANZI.PRT", "pattern"],
  ["DUANZI-GUDINGJIAN.PRT", "part"],
  ["SULIAOLUODING.PRT", "part"],
  ["8WEI-DIBANANQUANSHAN.ASM", "asm"],
  ["8WEI-DIBANANQUANSHAN.ASM", "asm"],
  ["阵列 3 / ANQUANSHAN-XIANLAN.PRT", "pattern"],
  ["阵列 4 / ANQUANSHAN-XIANLAN1.PRT", "pattern"],
];

const DURATION = 35;
const subAnimations: [number, string][] = [
  [0, "1.1"], [1.5, "1.2"], [2.15, "2.1"], [3.4, "3.1"], [5, "3.2"], [5.35, "4.1"], [8.4, "4.2"],
  [10, "5.1"], [10.5, "6.1"], [19.7, "6.2"], [20.5, "5.2"], [22.05, "5.3"], [23.4, "4.3"],
  [28.2, "4.4"], [30, "1.3"], [32, "7.1"], [35, "7.2"],
];
const keyframes = [0, 3, 5, 6.2, 8.4, 10.2, 12.2, 13.5, 13.9, 16.1, 19.5, 21.3, 24.2, 26.2, 28.2];
const at = (t: number) => `${(t / DURATION) * 100}%`;
const range = (n: number) => Array.from({ length: n }, (_, i) => i);

/* ---------- model view ---------- */

const Dots = ({ x, y, nx, ny }: { x: number; y: number; nx: number; ny: number }) => (
  <path
    fill="#b0bfc8"
    d={range(nx).map((i) => range(ny).map((j) => `M${x + i * 14} ${y + Math.round(j * 15.2)}h2v2h-2z`).join("")).join("")}
  />
);

const Slots = ({ x, y, n, w, c }: { x: number; y: number; n: number; w: number; c: string }) => (
  <path fill={c} d={range(n).map((i) => `M${x + 1} ${y + i * 12}h${w - 1}v6h-${w}v-5z`).join("")} />
);

const Upper = () => (
  <>
    <rect x="888" y="246" width="276" height="120" fill="#6e7776" />
    <Dots x={901} y={256} nx={19} ny={8} />
    <rect x="1164" y="245" width="21" height="120" fill="#54565f" />
    <Slots x={1171} y={244} n={10} w={13} c="#aebfca" />
    <path d="M1185.500 246v119" stroke="#7e888f" />
    <path d="M888 366h298" stroke="#54565f" strokeWidth="1.500" />
    <path d="M1046 287h78l3 3v27l-4 1h-77z" fill="#54565f" />
    <path d="M1052 298h76M1052 310h76" stroke="#c8ced2" strokeWidth="1.500" strokeDasharray="3 2" />
    <path d="M1126 291h39v9h-38zM1125 302h40v10h-38z" fill="#db9300" />
    <rect x="888" y="280" width="158" height="54" fill="#fff" />
    <rect x="889" y="295" width="159" height="17" fill="#dfe0d9" />
    <rect x="889" y="311" width="159" height="8" fill="#f2f2f2" />
    <path d="M888 319h158M982 294h64" stroke="#999" />
    {range(16).map((i) => {
      const x = 889 + Math.round(i * 9.93);
      return (
        <g key={i}>
          <circle cx={x + 3} cy="285" r="2" fill="#777" stroke="#333" strokeWidth=".5" />
          <circle cx={x + 3} cy="329" r="2" fill="#888" stroke="#333" strokeWidth=".5" />
          <path d={`M${x + 1} 297h6`} stroke="#2797ab" strokeWidth="2" />
          <path d={`M${x + 2} 301h5M${x + 3} 304h4M${x + 2} 307h3`} stroke="#a8a283" strokeDasharray="2 1" />
          <path d={`M${x + 9.5} 295v16`} stroke="#fff" />
          <path d={`M${x + 3} 312h6l-1 6h-4z`} fill="#1c1e20" />
          <path d={`M${x + 1} 313v5`} stroke="#888" />
          {i < 7 && <path d={`M${x + 8} 280v14M${x + 8} 320v14`} stroke="#777" strokeWidth=".7" />}
        </g>
      );
    })}
    <path d="M888 279.500h158" stroke="#444" strokeDasharray="9 5" />
    <path d="M888 334h158" stroke="#aaa" />
  </>
);

const rows = range(8).map((i) => 160 + i * 28.5);

const LeftModule = () => (
  <>
    <path d="M113 130h278v262H113z" fill="#000" />
    <path d="M145 130h115M325 128h17M389 130v115M113 394h233v-14M389 345v15" stroke="#3264ff" strokeWidth="3" />
    {[[165, 134], [333, 134], [165, 388], [333, 388]].map(([x, y]) => (
      <circle key={`${x}-${y}`} cx={x} cy={y} r="6" fill="#6e7776" />
    ))}
    <rect x="138" y="152" width="46" height="228" fill="#0e3f4f" />
    <rect x="184" y="152" width="64" height="228" fill="#1a86a8" />
    <rect x="243" y="152" width="8" height="228" fill="#0e3f4f" />
    <rect x="263" y="152" width="102" height="229" fill="#1a86a8" />
    {rows.map((y, i) => (
      <g key={y}>
        <circle cx="126" cy={y + 6} r="11" fill="#000" stroke="#3264ff" strokeWidth="2" strokeDasharray="14 8" />
        <path d={`M192 ${y + 8}h12v16h-12zM222 ${y}h18v14h-18z`} fill="#0b3468" />
        <path d={`M203 ${y + 4}h8v9h-8zM229 ${y + 4}h9v10h-9zM253 ${y + 2}h6v12h-6z`} fill="#cdd9e2" />
        <path d={`M113 ${y}l40 3h90M150 ${y + 6}h40`} stroke="#3264ff" strokeWidth="3" />
        <path d={`M250 ${y + 18}h17M${143 + (i % 3) * 14} ${y + 20}h10`} stroke="#f00" strokeWidth="3" />
      </g>
    ))}
    <path d="M130 149h235M183 238h27M245 238h63M207 295h38M312 352h20M185 382h70" stroke="#f00" strokeWidth="4" />
    <path d="M367 148h22v58h-22z" fill="#555b5e" />
    <path d="M386 150v54M363 210h20v22h-20zM363 242h20M297 386h14" stroke="#3264ff" strokeWidth="3" strokeDasharray="6 3" />
    <path d="M393 153h85M393 170h76" stroke="#8b4f1c" strokeWidth="4" />
    <path d="M393 161h92M393 181h80" stroke="#15666b" strokeWidth="4" />
    <path d="M393 188h98" stroke="#12e012" strokeWidth="5" />
    <path d="M393 199h96" stroke="#f6f21a" strokeWidth="4" />
    <path d="M368 252h30l8 24v50l-8 22h-30z" fill="#2b2d2f" />
    <path d="M374 254h18M374 346h18M396 274l10 8M396 330l12-8M384 262v22M384 318v22" stroke="#d5d5cf" strokeWidth="4" />
    <path d="M390 282h26v36h-26z" fill="#6d7275" />
    <path d="M403 300C450 292 485 330 500 370C508 398 490 408 458 406" stroke="#777f86" strokeWidth="17" />
    <path d="M405 297C450 290 480 328 494 368C500 390 490 400 460 402" stroke="#b4bcc3" strokeWidth="6" />
  </>
);

const RightModule = () => (
  <>
    <path d="M600 138h297v264H600z" fill="#000" />
    <path d="M600 138h14v264h-14z" fill="#4f5458" />
    <path d="M660 138h130M896 150v246M614 402h68M830 402h66M834 137h14M691 185v102M622 292h22v34h-22zM622 308h22M655 300h24M658 292v12" stroke="#3264ff" strokeWidth="3" />
    <circle cx="699" cy="153" r="8" stroke="#3264ff" strokeWidth="3" />
    {[[670, 145], [840, 145], [670, 397], [838, 397]].map(([x, y]) => (
      <circle key={`${x}-${y}`} cx={x} cy={y} r="6" fill="#6e7776" />
    ))}
    <path d="M694 186h10v100h-10z" fill="#6d7275" />
    <path d="M706 186h7v100h-7z" fill="#a89f18" />
    <path d="M618 186h30v98h-30z" fill="#45484a" />
    <path d="M632 190l14 20v56l-14 16M664 158h16v50M664 280h14v-30" stroke="#dcdcd6" strokeWidth="4" />
    <path d="M623 328h30v55h-30z" fill="#5a5d5f" />
    <path d="M629 332v48M642 334v44" stroke="#a9aeb1" strokeWidth="4" />
    <path d="M658 336h48v38h-48z" fill="#777d80" stroke="#ccc" strokeWidth="2" strokeDasharray="8 6" />
    <path d="M664 350l18-6M686 350l16-6M664 366l18-6M686 366l16-6" stroke="#15181a" strokeWidth="5" />
    <path d="M658 354h46" stroke="#3264ff" strokeWidth="3" />
    <path d="M600 333h20" stroke="#f6f21a" strokeWidth="4" />
    <path d="M600 343h20" stroke="#12a012" strokeWidth="3" />
    <path d="M600 352h20M600 370h20" stroke="#15666b" strokeWidth="3" />
    <path d="M600 361h20M600 380h20" stroke="#8b4f1c" strokeWidth="3" />
    <rect x="742" y="160" width="48" height="230" fill="#144355" />
    <rect x="791" y="160" width="55" height="230" fill="#1a86a8" />
    <rect x="846" y="160" width="10" height="230" fill="#0e3f4f" />
    <rect x="856" y="160" width="6" height="230" fill="#f00" />
    <rect x="861" y="160" width="46" height="230" fill="#1a86a8" />
    <rect x="907" y="160" width="7" height="230" fill="#7d97a3" />
    <rect x="914" y="160" width="56" height="230" fill="#1a86a8" />
    {rows.map((y, i) => (
      <g key={y}>
        <circle cx="729" cy={y + 11} r="12" fill="#000" stroke="#3264ff" strokeWidth="2" strokeDasharray="14 8" />
        <path d={`M736 ${y + 2}h12M736 ${y + 20}h12`} stroke="#3264ff" strokeWidth="3" />
        <path d={`M856 ${y + 4}h6v14h-6z`} fill="#051418" />
        <path d={`M916 ${y + 14}h14v15h-14zM942 ${y + 6}h12v18h-12z`} fill="#0b3468" />
        <path d={`M928 ${y + 10}h10v9h-10zM946 ${y + 8}h8v10h-8zM759 ${y + 8}h3v9h-3zM789 ${y + 8}h3v9h-3z`} fill="#cdd9e2" />
        <path d={`M950 ${y + 14}l14 6h51M962 ${y + 26}h${30 + (i % 2) * 18}`} stroke="#3264ff" strokeWidth="3" />
        <path d={`M${752 + (i % 3) * 12} ${y + 26}h8`} stroke="#f00" strokeWidth="3" />
        <path d={`M908 ${y + 8}v10`} stroke="#f00" strokeWidth="3" />
      </g>
    ))}
    <path d="M740 157h215M786 247h38M850 247h60M822 304h26M860 190h16M905 361h42M795 391h75" stroke="#f00" strokeWidth="4" />
    <path d="M600 146C640 148 672 182 700 230" stroke="#777f86" strokeWidth="19" />
    <path d="M602 143C642 146 672 178 698 224" stroke="#b4bcc3" strokeWidth="7" />
    <path d="M650 218h30v34h-30z" fill="#5f6568" />
    <path d="M658 238h46" stroke="#80888e" strokeWidth="16" />
  </>
);

const Model = () => (
  <svg viewBox="438 164 1131 463" preserveAspectRatio="xMidYMid slice" fill="none" role="img" aria-label="model">
    <defs>
      <linearGradient id="lip" x2="0" y2="1">
        <stop offset="0" stopColor="#9aa5ad" />
        <stop offset=".5" stopColor="#6e767d" />
        <stop offset="1" stopColor="#44474e" />
      </linearGradient>
      <linearGradient id="edge">
        <stop offset="0" stopColor="#8d98a1" />
        <stop offset="1" stopColor="#b3c0c9" />
      </linearGradient>
    </defs>
    <path d="M761 181l92 5v442h-93z" fill="#54565f" />
    <path d="M761 182l3-5 26-2 177-1 178-1h58l85 7v4H852l-90-1z" fill="#87919a" />
    <path d="M762 182l90 5" stroke="#6a727b" strokeWidth="3" />
    <path d="M852 184h440v443H852z" fill="#aebbc4" />
    <path d="M852 184h7v443h-7z" fill="url(#edge)" />
    <path d="M857 184h433" stroke="#cbdbe7" strokeWidth="3" />
    <path d="M1291.500 184v443" stroke="#858f97" strokeWidth="2" />
    <path d="M1292.500 185v114" stroke="#5f676e" />
    <path d="M869 216v411" stroke="#98a4ac" strokeWidth=".7" />
    <path d="M871 216h359v411H869z" fill="#b1bec7" />
    <path d="M1230 214h48v201h-1v212h-48z" fill="#54565f" />
    <path d="M871 210h408v6H871z" fill="url(#lip)" />
    <path d="M871 216.500h359" stroke="#3f4349" />
    <path d="M1280 380h10v35h-10z" fill="#6e7776" />
    <path d="M888.500 217v29" stroke="#94a1a9" />
    <Upper />
    <path d="M869 396h19v231h-19zM1185 395l15-1h29v233h-44z" fill="#4499c4" />
    <path d="M888 396h113v231H887zM1050 395h113v232h-114z" fill="#6e7776" />
    <Dots x={900} y={407} nx={8} ny={2} />
    <Dots x={900} y={529} nx={8} ny={7} />
    <Dots x={1055} y={407} nx={8} ny={2} />
    <Dots x={1055} y={528} nx={8} ny={7} />
    <path d="M1001 395h21v232h-22z" fill="#54565f" />
    <Slots x={1003} y={403} n={19} w={18} c="#aebfca" />
    <path d="M1022 395h28v232h-28z" fill="#b1bec7" />
    <path d="M1163 395h22v232h-23z" fill="#0f5459" />
    <Slots x={1170} y={403} n={19} w={14} c="#28aec1" />
    <path d="M1014 415v30" stroke="#12c912" strokeWidth="2" strokeDasharray="6 6" />
    <path d="M921 412h20v20h-20zM921 523h19v104h-20z" fill="#db9300" />
    <path d="M921.500 412v20M937.500 412v20M937.500 524v103" stroke="#8b5d00" />
    <path d="M929.500 412v20M929 524v103" stroke="#6e7776" strokeWidth="2" strokeDasharray="6 2" />
    <rect x="857" y="384" width="15" height="34" rx="7" fill="#6e7776" stroke="#22272a" />
    <g transform="translate(850 390) scale(.33333)">
      <LeftModule />
      <RightModule />
    </g>
  </svg>
);

/* ---------- page parts ---------- */

const Tools = () => (
  <ToolBar role="toolbar">
    {toolbar.map((t, i) => {
      if (t === "|") return <Grip key={i} $first={i === 0} />;
      if (t[0] === "v" && t.length < 3) return <DropArrow key={i} $dim={t === "v-"} aria-label="menu" />;
      const name = t.replace("*", "");
      return (
        <ToolButton key={i} $on={t.endsWith("*")} aria-label={name}>
          <Svg>{icons[name]}</Svg>
        </ToolButton>
      );
    })}
  </ToolBar>
);

const Side = () => (
  <SidePanel>
    <TabRow><Tab /></TabRow>
    <PanelBody>
      <PanelMain>
        <PanelTools>
          <ToolPair>
            <ToolButton $w={22} aria-label="settings">
              <Svg>
                <path d="M1 6q3-4 8-3l3 1v3H8L5 6z" fill="#d9dcde" />
                <path d="M7 8v10h3V8z" fill="#c43b1e" stroke="#842" />
                <path d="M13 9h4v9h-4z" fill="#3268c8" stroke="#234" />
                <path d="M12 2v4l3 3 3-3V2" strokeWidth="2" />
              </Svg>
            </ToolButton>
            <DropArrow aria-label="settings menu" />
          </ToolPair>
          <ToolPair>
            <ToolButton $w={22} aria-label="show">
              <Svg>
                <path d="M2.500 1.500h15v17h-15z" fill="#fff" stroke="#999" />
                <circle cx="5.500" cy="4.500" r="1.200" />
                <circle cx="5.500" cy="9.500" r="1.200" />
                <circle cx="5.500" cy="14.500" r="1.200" />
                <path d="M9 5h6M9 10h6M9 15h6" stroke="#8ab" strokeDasharray="2 1" />
              </Svg>
            </ToolButton>
            <DropArrow aria-label="show menu" />
          </ToolPair>
        </PanelTools>
        <TreeBox>
          <Tree role="tree">
            {tree.map(([name, kind], i) => (
              <TreeRow key={i} role="treeitem">
                {kind !== "part" && <Expander aria-label="expand" />}
                <Branch $short={kind !== "part"} />
                <RowIcon>{kind === "part" ? <PartIcon /> : kind === "asm" ? <AsmIcon /> : <PatternIcon />}</RowIcon>
                {name}
              </TreeRow>
            ))}
          </Tree>
          <ScrollStrip>
            <ScrollArrow $dir="up" aria-label="up" />
            <Thumb $end={125} />
            <ScrollArrow $dir="down" aria-label="down" />
          </ScrollStrip>
        </TreeBox>
      </PanelMain>
      <Sash>
        <SashTab aria-label="navigator" />
        <SashTab $strong aria-label="browser" />
      </Sash>
    </PanelBody>
  </SidePanel>
);

const Marker = ({ t, y, label, color }: { t: number; y: number; label?: string; color: string }) => (
  <svg x={at(t)} y={y}>
    <path d="M-4-3h8L0 5z" fill="none" stroke={color} />
    {label && <text x="0" y="9" fill={color}>{label}</text>}
  </svg>
);

const TimelinePanel = () => (
  <Timeline>
    <TimelineMain>
      <Plot>
        <svg width="100%" height="168">
          <line x1="100%" x2="100%" y1="0" y2="168" stroke="#221414" strokeDasharray="4 2" />
          <line x1="0" x2="100%" y1="108.500" y2="108.500" stroke="#000" strokeDasharray="3 2" />
          <line x1="0" x2={at(28.2)} y1="128.500" y2="128.500" stroke="#800000" />
          {subAnimations.map(([t, label]) => <Marker key={label} t={t} y={108} label={label} color="#008080" />)}
          {keyframes.map((t) => <Marker key={t} t={t} y={128} label={t === 0 ? "Kfs1.1" : undefined} color="#800000" />)}
        </svg>
      </Plot>
      <RulerRow>
        <RulerLabel>
          时间
          <RulerValue>35.00</RulerValue>
        </RulerLabel>
        <svg width="100%" height="33">
          <line x1="0" x2="100%" y1="28.500" y2="28.500" stroke="#000" />
          {range(36).map((t) => (
            <line key={t} x1={at(t)} x2={at(t)} y1={t % 10 === 0 ? 9 : t % 5 === 0 ? 14 : 19} y2="28.500" stroke="#000" />
          ))}
          {[0, 10, 20, 30].map((t) => <text key={t} x={at(t)} y="13" fill="#000">{t}</text>)}
        </svg>
      </RulerRow>
      <ScrollStrip $flat>
        <ScrollArrow $dir="left" aria-label="left" />
        <Thumb $flat />
        <ScrollArrow $dir="right" aria-label="right" />
      </ScrollStrip>
    </TimelineMain>
    <TimelineScroll>
      <ScrollStrip>
        <ScrollArrow $dir="up" aria-label="up" />
        <Thumb $start={28} />
        <ScrollArrow $dir="down" aria-label="down" />
      </ScrollStrip>
    </TimelineScroll>
  </Timeline>
);

const Glyph = ({ d, w = 20 }: { d: string; w?: number }) => (
  <svg width={w} height="16" viewBox={`0 0 ${w} 16`} aria-hidden="true">
    <path d={d} fill="#000" stroke="#b9b9b9" strokeWidth=".7" />
  </svg>
);

const AnimationDialog = () => (
  <Dialog aria-label="动画">
    <DialogHead>
      <DialogTitle><AppIcon />动画</DialogTitle>
      <DialogClose aria-label="close">
        <svg width="12" height="12" viewBox="0 0 12 12">
          <path d="M1 1h3l2 3 2-3h3L8 6l3 5H8L6 8l-2 3H1l3-5z" fill="#fff" stroke="#555" />
        </svg>
      </DialogClose>
    </DialogHead>
    <DialogBody>
      <FrameLabel htmlFor="frame">帧</FrameLabel>
      <Slider id="frame" type="range" min="0" max="420" defaultValue="420" />
      <ScaleRow><span>0</span><span>420</span><span>420</span></ScaleRow>
      <ButtonRow>
        <SoftButton aria-label="play back"><Glyph d="M14 1v14L5 8z" /></SoftButton>
        <SoftButton aria-label="stop"><Glyph d="M2 1h15v14H2z" /></SoftButton>
        <SoftButton aria-label="play"><Glyph d="M6 1v14l9-7z" /></SoftButton>
      </ButtonRow>
      <ButtonRow>
        <SoftButton $w={79} aria-label="rewind"><Glyph d="M9 1v14L0 8zM19 1v14l-9-7z" /></SoftButton>
        <SoftButton $w={74} aria-label="first"><Glyph d="M2 1h3v14H2zM15 1v14L6 8z" /></SoftButton>
        <SoftButton $w={73} aria-label="last"><Glyph d="M3 1v14l9-7zM13 1h3v14h-3z" /></SoftButton>
        <SoftButton aria-label="forward"><Glyph d="M1 1v14l9-7zM10 1v14l9-7z" /></SoftButton>
      </ButtonRow>
      <SpeedLabel htmlFor="speed">速度</SpeedLabel>
      <SpeedRow>
        <SoftButton $on $w={38} $h={22} aria-label="loop">
          <svg width="34" height="16" viewBox="0 0 34 16" fill="none" stroke="#000">
            <rect x="1.500" y="2.500" width="31" height="11" rx="5.500" />
            <path d="M16 0v5l5-2.500z" fill="#000" stroke="none" />
          </svg>
        </SoftButton>
        <SoftButton $w={38} $h={22} aria-label="reverse">
          <svg width="34" height="16" viewBox="0 0 34 16" fill="none" stroke="#000">
            <path d="M2 2.500h25a5 5 0 0 1 0 11H2" />
            <path d="M16 0v5l5-2.500zM20 11v5l-5-2.500z" fill="#000" stroke="none" />
          </svg>
        </SoftButton>
        <Slider id="speed" type="range" min="0" max="100" defaultValue="100" />
      </SpeedRow>
      <CaptureRow><SoftButton $w={48} $h={18}>捕获. . .</SoftButton></CaptureRow>
      <DialogFoot><CloseButton $w={38} $h={20}>关闭</CloseButton></DialogFoot>
    </DialogBody>
  </Dialog>
);

export default function App() {
  return (
    <Window>
      <Global />
      <TitleBar>
        <AppIcon />
        <TitleText>ZONG-ZHUANGPEI-BEIBAN (活动的) - Creo Elements/Pro 5.0</TitleText>
        <WindowButtons>
          <WindowButton aria-label="minimize">
            <svg width="12" height="12"><rect x="1" y="4" width="10" height="4" fill="#fff" stroke="#444" /></svg>
          </WindowButton>
          <WindowButton aria-label="restore">
            <svg width="12" height="12" fill="none"><path d="M3-1h8v8H3z" stroke="#fff" /><path d="M2 2h6v6H2z" stroke="#fff" strokeWidth="2" fill="#555" /></svg>
          </WindowButton>
          <WindowButton $wide aria-label="close window">
            <svg width="12" height="12"><path d="M1-2l10 10M11-2L1 8" stroke="#fff" strokeWidth="3" /></svg>
          </WindowButton>
        </WindowButtons>
      </TitleBar>
      <MenuBar>
        {menus.map(([name, key, tail]) => (
          <MenuButton key={name}>{name}(<u>{key}</u>){tail}</MenuButton>
        ))}
      </MenuBar>
      <Tools />
      <MessageArea>
        <MessageList>
          <Message>对象。</Message>
          <Message>
            <MessageMark>
              <svg width="13" height="14" viewBox="0 0 13 14"><path d="M6.500 1L13 13H0z" fill="#ff0" stroke="#000" /><path d="M6.500 5v4M6.500 10.500v1.500" stroke="#000" strokeWidth="2" /></svg>
            </MessageMark>
            7.2 的开始时间大于动画终止时间。
          </Message>
          {["在时间为34.9999时处理帧", "正在生成420的帧420"].map((m) => (
            <Message key={m}>
              <MessageMark><svg width="8" height="6"><circle cx="3" cy="3" r="2.500" fill="#0000f0" /></svg></MessageMark>
              {m}
            </Message>
          ))}
        </MessageList>
        <StatusTools>
          <StatusLight>
            <svg width="10" height="20" viewBox="0 0 10 20">
              <rect x="3" y="1" width="4" height="5" fill="#f59a94" stroke="#876" />
              <rect x="3" y="14" width="4" height="5" fill="#c9f7c1" stroke="#676" />
              <circle cx="5" cy="10" r="4.500" fill="#ffe400" stroke="#54451a" />
            </svg>
          </StatusLight>
          <SelectWrap>
            <FilterSelect aria-label="filter" defaultValue="smart"><option value="smart">智能</option></FilterSelect>
          </SelectWrap>
        </StatusTools>
      </MessageArea>
      <Workspace>
        <Side />
        <Center>
          <Viewport><Model /></Viewport>
          <TimelinePanel />
        </Center>
        <RightTools>
          <GripFlat />
          {sideIcons.map((name) => (
            <ToolButton key={name} aria-label={name}><Svg>{icons[name]}</Svg></ToolButton>
          ))}
          <RightFoot />
        </RightTools>
      </Workspace>
      <DesktopEdge />
      <AnimationDialog />
      <Ring viewBox="0 0 96 542" aria-hidden="true">
        <ellipse cx="48" cy="271" rx="44" ry="266" fill="none" stroke="#fb3838" strokeWidth="7" />
      </Ring>
      <Watermark>
        <svg width="58" height="62" viewBox="0 0 58 62" fill="none">
          <ellipse cx="22" cy="24" rx="13" ry="24" transform="rotate(-38 22 24)" stroke="#a2b5c8" strokeWidth="4" />
          <path d="M34 54q-14 4-20-5q-4-14 14-16" stroke="#c0ced9" strokeWidth="2" />
          <path d="M46 22q14-2 10 14q-6 20-22 21q-6-1-3-7M46 22q-8 2-10 8" stroke="#dd9ba3" strokeWidth="4" />
        </svg>
        <WatermarkText>
          <WatermarkName>野火论坛</WatermarkName>
          <WatermarkUrl>www.proewildfire.cn</WatermarkUrl>
        </WatermarkText>
      </Watermark>
    </Window>
  );
}
